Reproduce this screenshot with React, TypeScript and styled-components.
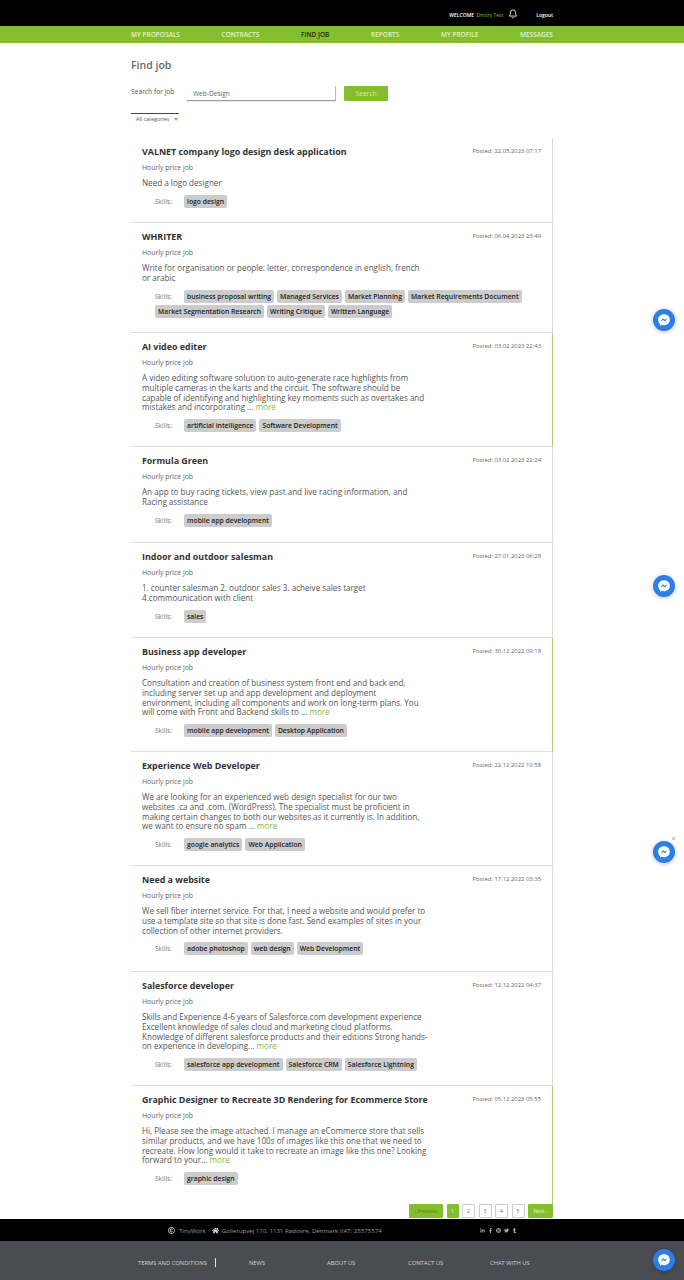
import React from "react";
import styled, { createGlobalStyle } from "styled-components";
import { FaHome, FaLinkedinIn, FaFacebookF, FaPinterest, FaTwitter, FaTumblr, FaRegCopyright } from "react-icons/fa";
import { LuBell } from "react-icons/lu";

const Global = createGlobalStyle`
  html, body { margin: 0; padding: 0; background: #fff; }
  body { font-family: "Open Sans", "Liberation Sans", sans-serif; }
  * { box-sizing: border-box; }
`;

const Page = styled.div`
  position: relative;
  width: 684px;
  height: 1280px;
  overflow: hidden;
`;
const TopBar = styled.header`
  height: 26px;
  background: #000;
  display: flex;
  justify-content: flex-end;
  align-items: center;
  padding: 4px 131px 0 0;
  color: #fff;
  font-size: 5px;
`;
const Welcome = styled.span`
  font-weight: 600;
  em { font-style: normal; font-weight: 400; color: #84bd2d; margin-left: 1px; }
`;
const BellWrap = styled.span`
  display: flex;
  margin: -3px 0 0 5px;
  font-size: 10px;
`;
const Logout = styled.span`
  margin-left: 18px;
  font-weight: 600;
`;
const NavBar = styled.nav`
  height: 17px;
  background: #84bd2d;
  padding: 0 131px;
  display: flex;
  justify-content: space-between;
  align-items: center;
`;
const NavItem = styled.a<{ $active?: boolean }>`
  font-size: 6.5px;
  font-weight: 600;
  text-transform: uppercase;
  color: ${(p) => (p.$active ? "#1e2a10" : "#e6f1d2")};
`;
const Main = styled.main`
  width: 422px;
  margin-left: 131px;
`;
const Title = styled.h1`
  margin: 15px 0 0;
  font-size: 10.5px;
  line-height: 15px;
  font-weight: 600;
  color: #666;
`;
const SearchRow = styled.div`
  margin-top: 13px;
  height: 15px;
  display: flex;
  align-items: flex-start;
`;
const SearchLabel = styled.label`
  width: 56px;
  font-size: 6.7px;
  line-height: 12px;
  color: #555;
`;
const SearchInput = styled.div`
  width: 149px;
  height: 15px;
  padding: 2px 0 0 6px;
  font-size: 6.6px;
  line-height: 12px;
  color: #666;
  border-bottom: 1px solid #999;
  border-right: 1px solid #bbb;
  box-shadow: 0 1px 1px rgba(0,0,0,.08);
`;
const SearchButton = styled.button`
  width: 44px;
  height: 15px;
  margin-left: 8px;
  padding: 0;
  border: 0;
  border-radius: 1px;
  background: #84bd2d;
  color: #d8ebb8;
  font: 6.6px "Open Sans", sans-serif;
`;
const Category = styled.div`
  width: 48px;
  height: 11px;
  margin-top: 12px;
  padding-left: 5px;
  border-top: 1px solid #444;
  display: flex;
  align-items: center;
  font-size: 5.4px;
  color: #555;
`;
const Tri = styled.i`
  margin-left: 5px;
  border-left: 2px solid transparent;
  border-right: 2px solid transparent;
  border-top: 3px solid #84bd2d;
`;
const List = styled.section`
  margin-top: 14px;
`;
const Card = styled.article<{ $accent?: boolean; $h: number }>`
  height: ${(p) => p.$h}px;
  padding: 7px 11px 0 11px;
  border-right: 1px solid ${(p) => (p.$accent ? "#a9d273" : "#dcdcdc")};
  border-bottom: 1px solid #dedede;
  &:last-child { border-bottom: 0; }
`;
const CardHead = styled.div`
  display: flex;
  justify-content: space-between;
  align-items: flex-start;
  height: 14px;
`;
const JobTitle = styled.h2`
  margin: 0;
  font-size: 8.9px;
  line-height: 13px;
  font-weight: 700;
  color: #333;
`;
const Posted = styled.span`
  font-size: 5.9px;
  line-height: 13px;
  color: #666;
`;
const JobType = styled.div`
  margin-top: 4px;
  font-size: 6.9px;
  line-height: 10px;
  color: #666;
`;
const Desc = styled.p`
  width: 287px;
  margin: 5px 0 0;
  font-size: 8.1px;
  line-height: 9.8px;
  color: #555;
  a { color: #84bd2d; }
`;
const Skills = styled.div`
  margin-top: 7px;
  padding-left: 13px;
  display: flex;
  flex-wrap: wrap;
  gap: 2px 3px;
  align-items: center;
`;
const SkillLabel = styled.span`
  width: 26px;
  font-size: 6.6px;
  color: #777;
`;
const Tag = styled.span`
  height: 13px;
  padding: 0 3px;
  border-radius: 2px;
  background: #cccccc;
  color: #222;
  font-size: 6.8px;
  font-weight: 600;
  line-height: 13px;
`;
const Pager = styled.div`
  display: flex;
  justify-content: flex-end;
  gap: 3.5px;
  margin-top: -6px;
`;
const PageBtn = styled.span<{ $on?: boolean; $dim?: boolean; $w: number }>`
  width: ${(p) => p.$w}px;
  height: 14px;
  display: flex;
  align-items: center;
  justify-content: center;
  font-size: 5px;
  border-radius: 1px;
  color: ${(p) => (p.$dim ? "#4f7d14" : p.$on ? "#eef6df" : "#666")};
  background: ${(p) => (p.$on ? "#84bd2d" : "#fff")};
  border: 1px solid ${(p) => (p.$on ? "#84bd2d" : "#ccc")};
`;
const FooterTop = styled.div`
  position: absolute;
  left: 0;
  right: 0;
  top: 1219px;
  height: 22px;
  background: #000;
  color: #999;
  font-size: 6.1px;
  display: flex;
  align-items: center;
  padding-left: 168px;
`;
const FootGlyph = styled.span<{ $gap: number }>`
  display: flex;
  margin-right: ${(p) => p.$gap}px;
  color: #ddd;
  font-size: 7px;
`;
const FootBrand = styled.span`
  margin-right: 6px;
`;
const Social = styled.div`
  margin-left: 98px;
  display: flex;
  gap: 3px;
  font-size: 5px;
  color: #aaa;
`;
const FooterLinks = styled.div`
  position: absolute;
  left: 0;
  right: 0;
  top: 1241px;
  height: 39px;
  background: #4a4c52;
  padding: 15px 0 0 138px;
  display: flex;
  font-size: 5.8px;
  line-height: 14px;
  color: #d2d3d5;
`;
const FootLink = styled.span<{ $w: number }>`
  width: ${(p) => p.$w}px;
  white-space: nowrap;
`;
const FootSep = styled.span`
  width: 34px;
  height: 9px;
  margin-top: 2px;
  border-left: 1px solid #e5e5e5;
`;
const Messenger = styled.div<{ $top: number }>`
  position: absolute;
  left: 653px;
  top: ${(p) => p.$top}px;
  width: 22px;
  height: 22px;
  border-radius: 50%;
  background: #2d7ee8;
  box-shadow: 0 1px 4px rgba(0,0,0,.25);
  display: flex;
  align-items: center;
  justify-content: center;
`;
const Close = styled.span`
  position: absolute;
  left: 672px;
  top: 834px;
  font-size: 6px;
  line-height: 8px;
  color: #777;
`;

const Icon = () => (
  <svg width="14" height="14" viewBox="0 0 24 24">
    <path fill="#fff" d="M12 2C6.4 2 2 6.1 2 11.6c0 2.9 1.2 5.4 3.1 7.1v3.3l3-1.7c1.2.4 2.5.6 3.9.6 5.6 0 10-4.1 10-9.5S17.6 2 12 2z" />
    <path fill="#2d7ee8" d="M6.2 14.6l4-5.6 3 2.6 4.6-2.6-4 5.6-3-2.6z" />
  </svg>
);

type Job = { t: string; d: string; date: string; skills: string[]; more?: boolean; h: number; accent?: boolean };
const jobs: Job[] = [
  { t: "VALNET company logo design desk application", date: "22.05.2023 07:17", d: "Need a logo designer", skills: ["logo design"], h: 85 },
  { t: "WHRITER", date: "06.04.2023 23:49", d: "Write for organisation or people: letter, correspondence in english, french or arabic", skills: ["business proposal writing", "Managed Services", "Market Planning", "Market Requirements Document", "Market Segmentation Research", "Writing Critique", "Written Language"], h: 110 },
  { t: "AI video editer", date: "03.02.2023 22:43", d: "A video editing software solution to auto-generate race highlights from multiple cameras in the karts and the circuit. The software should be capable of identifying and highlighting key moments such as overtakes and mistakes and incorporating ...", more: true, skills: ["artificial intelligence", "Software Development"], h: 114, accent: true },
  { t: "Formula Green", date: "03.02.2023 22:24", d: "An app to buy racing tickets, view past and live racing information, and Racing assistance", skills: ["mobile app development"], h: 96 },
  { t: "Indoor and outdoor salesman", date: "27.01.2023 06:28", d: "1. counter salesman 2. outdoor sales 3. acheive sales target 4.commounication with client", skills: ["sales"], h: 95 },
  { t: "Business app developer", date: "30.12.2022 09:18", d: "Consultation and creation of business system front end and back end, including server set up and app development and deployment environment, including all components and work on long-term plans. You will come with Front and Backend skills to ...", more: true, skills: ["mobile app development", "Desktop Application"], h: 114, accent: true },
  { t: "Experience Web Developer", date: "22.12.2022 10:58", d: "We are looking for an experienced web design specialist for our two websites .ca and .com. (WordPress). The specialist must be proficient in making certain changes to both our websites as it currently is. In addition, we want to ensure no spam ...", more: true, skills: ["google analytics", "Web Application"], h: 114 },
  { t: "Need a website", date: "17.12.2022 03:35", d: "We sell fiber internet service. For that, I need a website and would prefer to use a template site so that site is done fast. Send examples of sites in your collection of other internet providers.", skills: ["adobe photoshop", "web design", "Web Development"], h: 106 },
  { t: "Salesforce developer", date: "12.12.2022 04:37", d: "Skills and Experience 4-6 years of Salesforce.com development experience Excellent knowledge of sales cloud and marketing cloud platforms. Knowledge of different salesforce products and their editions Strong hands-on experience in developing...", more: true, skills: ["salesforce app development", "Salesforce CRM", "Salesforce Lightning"], h: 114 },
  { t: "Graphic Designer to Recreate 3D Rendering for Ecommerce Store", date: "05.12.2023 05:55", d: "Hi, Please see the image attached. I manage an eCommerce store that sells similar products, and we have 100s of images like this one that we need to recreate. How long would it take to recreate an image like this one? Looking forward to your...", more: true, skills: ["graphic design"], h: 124, accent: true },
];

export default function App() {
  return (
    <Page>
      <Global />
      <TopBar>
        <Welcome>WELCOME <em>Dmitry Test</em></Welcome>
        <BellWrap><LuBell /></BellWrap>
        <Logout>Logout</Logout>
      </TopBar>
      <NavBar>
        <NavItem>My proposals</NavItem>
        <NavItem>Contracts</NavItem>
        <NavItem $active>Find job</NavItem>
        <NavItem>Reports</NavItem>
        <NavItem>My profile</NavItem>
        <NavItem>Messages</NavItem>
      </NavBar>
      <Main>
        <Title>Find job</Title>
        <SearchRow>
          <SearchLabel>Search for job</SearchLabel>
          <SearchInput>Web-Design</SearchInput>
          <SearchButton>Search</SearchButton>
        </SearchRow>
        <Category>All categories<Tri /></Category>
        <List>
          {jobs.map((j) => (
            <Card key={j.t} $h={j.h} $accent={j.accent}>
              <CardHead>
                <JobTitle>{j.t}</JobTitle>
                <Posted>Posted: {j.date}</Posted>
              </CardHead>
              <JobType>Hourly price job</JobType>
              <Desc>{j.d}{j.more && <> <a>more</a></>}</Desc>
              <Skills>
                <SkillLabel>Skills:</SkillLabel>
                {j.skills.map((s) => <Tag key={s}>{s}</Tag>)}
              </Skills>
            </Card>
          ))}
        </List>
        <Pager>
          <PageBtn $on $dim $w={34}>‹ Previous</PageBtn>
          <PageBtn $on $w={12}>1</PageBtn>
          <PageBtn $w={13}>2</PageBtn>
          <PageBtn $w={13}>3</PageBtn>
          <PageBtn $w={13}>4</PageBtn>
          <PageBtn $w={13}>5</PageBtn>
          <PageBtn $on $w={25}>Next ›</PageBtn>
        </Pager>
      </Main>
      <FooterTop>
        <FootGlyph $gap={4}><FaRegCopyright /></FootGlyph>
        <FootBrand>TinyWork</FootBrand>
        <FootGlyph $gap={3}><FaHome /></FootGlyph>
        <span>Gollerupvej 110, 1131 Rødovre, Denmark VAT: 25575574</span>
        <Social><FaLinkedinIn /><FaFacebookF /><FaPinterest /><FaTwitter /><FaTumblr /></Social>
      </FooterTop>
      <FooterLinks>
        <FootLink $w={77}>TERMS AND CONDITIONS</FootLink>
        <FootSep />
        <FootLink $w={78}>NEWS</FootLink>
        <FootLink $w={81}>ABOUT US</FootLink>
        <FootLink $w={82}>CONTACT US</FootLink>
        <FootLink $w={50}>CHAT WITH US</FootLink>
      </FooterLinks>
      <Messenger $top={309}><Icon /></Messenger>
      <Messenger $top={575}><Icon /></Messenger>
      <Close>x</Close>
      <Messenger $top={841}><Icon /></Messenger>
      <Messenger $top={1249}><Icon /></Messenger>
    </Page>
  );
}
